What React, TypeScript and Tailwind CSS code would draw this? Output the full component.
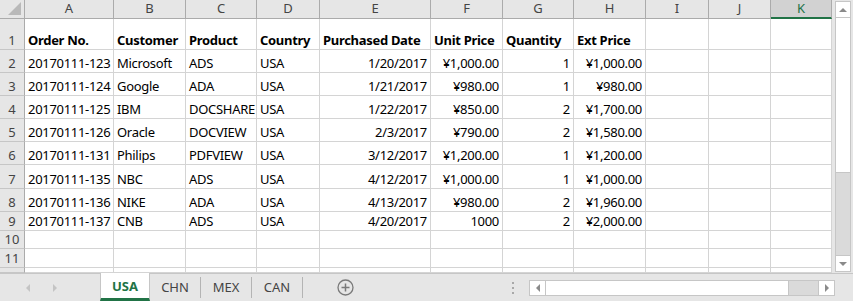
import React from "react";

const colWidths = [25, 89, 72, 71, 63, 111, 72, 71, 72, 63, 62, 61];
const colLetters = ["A", "B", "C", "D", "E", "F", "G", "H", "I", "J", "K"];
const rowHeights = [31, 23, 23, 23, 23, 23, 24, 23, 19, 18, 19, 5];

// true = right aligned
const rightCols = [false, false, false, false, true, true, true, true];

const data: string[][] = [
  ["Order No.", "Customer", "Product", "Country", "Purchased Date", "Unit Price", "Quantity", "Ext Price"],
  ["20170111-123", "Microsoft", "ADS", "USA", "1/20/2017", "¥1,000.00", "1", "¥1,000.00"],
  ["20170111-124", "Google", "ADA", "USA", "1/21/2017", "¥980.00", "1", "¥980.00"],
  ["20170111-125", "IBM", "DOCSHARE", "USA", "1/22/2017", "¥850.00", "2", "¥1,700.00"],
  ["20170111-126", "Oracle", "DOCVIEW", "USA", "2/3/2017", "¥790.00", "2", "¥1,580.00"],
  ["20170111-131", "Philips", "PDFVIEW", "USA", "3/12/2017", "¥1,200.00", "1", "¥1,200.00"],
  ["20170111-135", "NBC", "ADS", "USA", "4/12/2017", "¥1,000.00", "1", "¥1,000.00"],
  ["20170111-136", "NIKE", "ADA", "USA", "4/13/2017", "¥980.00", "2", "¥1,960.00"],
  ["20170111-137", "CNB", "ADS", "USA", "4/20/2017", "1000", "2", "¥2,000.00"],
];

function Grid() {
  const template = colWidths.map((w) => `${w}px`).join(" ");
  const rowsTemplate = ["19px", ...rowHeights.map((h) => `${h}px`)].join(" ");
  return (
    <div
      className="grid w-[832px] shrink-0 bg-white"
      style={{ gridTemplateColumns: template, gridTemplateRows: rowsTemplate }}
    >
      {/* corner */}
      <div className="relative bg-[#e6e6e6] border-r border-b border-[#ababab]">
        <div className="absolute right-[3px] bottom-[3px] w-0 h-0 border-l-[13px] border-l-transparent border-b-[13px] border-b-[#b9b9b9]" />
      </div>
      {colLetters.map((l) => (
        <div
          key={l}
          className={
            "flex items-center justify-center border-r border-[#ababab] text-[13px] " +
            (l === "K"
              ? "bg-[#d2d2d2] border-b-2 border-b-[#217346] text-[#217346]"
              : "bg-[#e6e6e6] border-b border-b-[#ababab] text-[#444]")
          }
        >
          {l}
        </div>
      ))}
      {rowHeights.map((_, r) => (
        <React.Fragment key={r}>
          <div className="flex items-end justify-center bg-[#e6e6e6] border-r border-[#ababab] border-b border-b-[#c6c6c6] text-[13px] leading-[17px] text-[#444]">
            {r < 11 ? r + 1 : ""}
          </div>
          {colLetters.map((l, c) => {
            const v = data[r]?.[c] ?? "";
            return (
              <div
                key={l}
                className={
                  "flex items-end px-[3px] border-r border-b border-[#d4d4d4] text-[13px] leading-[17px] tracking-[-0.3px] text-black whitespace-nowrap " +
                  (r === 0 ? "font-bold " : "") +
                  (r > 0 && rightCols[c] ? "justify-end" : "justify-start")
                }
              >
                {v}
              </div>
            );
          })}
        </React.Fragment>
      ))}
    </div>
  );
}

function VScroll() {
  return (
    <div className="w-[21px] shrink-0 h-[273px] bg-[#e6e6e6] pl-[3px] pr-[2px] pt-[1px] pb-[1px]">
      <div className="h-full flex flex-col border border-[#c6c6c6] bg-[#dadada]">
        <div className="h-[16px] bg-white border-b border-[#c6c6c6] flex items-center justify-center">
          <div className="w-0 h-0 border-l-[4px] border-r-[4px] border-b-[4px] border-l-transparent border-r-transparent border-b-[#8a8a8a]" />
        </div>
        <div className="h-[155px] bg-white border-b border-[#c6c6c6]" />
        <div className="flex-1" />
        <div className="h-[16px] bg-white border-t border-[#c6c6c6] flex items-center justify-center">
          <div className="w-0 h-0 border-l-[4px] border-r-[4px] border-t-[4px] border-l-transparent border-r-transparent border-t-[#8a8a8a]" />
        </div>
      </div>
    </div>
  );
}

function TabBar() {
  const tabs = ["CHN", "MEX", "CAN"];
  return (
    <div className="h-[28px] flex bg-[#e6e6e6] border-t border-[#c6c6c6] text-[13px]">
      <div className="w-[100px] shrink-0 flex items-center pl-[26px] gap-[23px]">
        <div className="w-0 h-0 border-t-[4px] border-b-[4px] border-r-[4px] border-t-transparent border-b-transparent border-r-[#c4c4c4]" />
        <div className="w-0 h-0 border-t-[4px] border-b-[4px] border-l-[4px] border-t-transparent border-b-transparent border-l-[#c4c4c4]" />
      </div>
      <div className="w-[50px] shrink-0 -mt-px flex items-center justify-center bg-white border-l border-r border-[#c6c6c6] border-b-[3px] border-b-[#217346] font-bold text-[#217346] pt-[2px]">
        USA
      </div>
      {tabs.map((t) => (
        <div key={t} className="flex shrink-0 items-center py-[3px]">
          <div className="w-[50px] flex items-center justify-center text-[#444]">{t}</div>
          <div className="w-px h-full bg-[#b4b4b4]" />
        </div>
      ))}
      <div className="w-[84px] shrink-0 flex items-center justify-center">
        <svg width="17" height="17" viewBox="0 0 17 17">
          <circle cx="8.5" cy="8.5" r="7.5" fill="none" stroke="#7a7a7a" strokeWidth="1.3" />
          <path d="M8.5 4.5v8M4.5 8.5h8" stroke="#7a7a7a" strokeWidth="1.5" />
        </svg>
      </div>
      <div className="w-[118px] shrink-0" />
      <div className="w-[16px] shrink-0 flex flex-col items-center justify-center gap-[3px]">
        <div className="w-[2px] h-[2px] bg-[#a8a8a8]" />
        <div className="w-[2px] h-[2px] bg-[#a8a8a8]" />
        <div className="w-[2px] h-[2px] bg-[#a8a8a8]" />
      </div>
      <div className="flex shrink-0 items-center ml-[8px] h-full">
        <div className="flex h-[16px] border border-[#c6c6c6] bg-[#dadada] w-[306px]">
          <div className="w-[16px] bg-white border-r border-[#c6c6c6] flex items-center justify-center">
            <div className="w-0 h-0 border-t-[4px] border-b-[4px] border-r-[4px] border-t-transparent border-b-transparent border-r-[#8a8a8a]" />
          </div>
          <div className="w-[243px] bg-white border-r border-[#c6c6c6]" />
          <div className="flex-1" />
          <div className="w-[16px] bg-white border-l border-[#c6c6c6] flex items-center justify-center">
            <div className="w-0 h-0 border-t-[4px] border-b-[4px] border-l-[4px] border-t-transparent border-b-transparent border-l-[#8a8a8a]" />
          </div>
        </div>
      </div>
    </div>
  );
}

export default function App() {
  return (
    <div className="w-[853px] h-[301px] overflow-hidden bg-[#e6e6e6] font-['Noto_Sans',sans-serif]">
      <div className="flex h-[273px] overflow-hidden">
        <Grid />
        <VScroll />
      </div>
      <TabBar />
    </div>
  );
}
